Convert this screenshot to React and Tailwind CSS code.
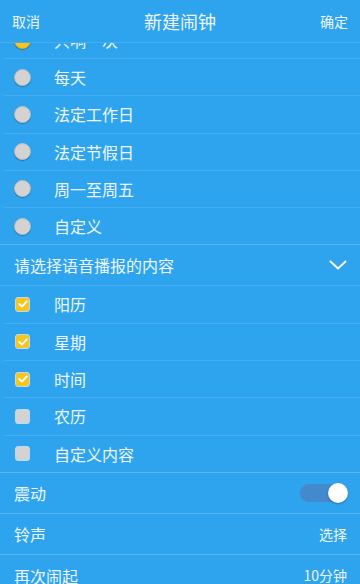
import React from 'react';

const repeatOptions = [
  { label: '只响一次', selected: true },
  { label: '每天' },
  { label: '法定工作日' },
  { label: '法定节假日' },
  { label: '周一至周五' },
  { label: '自定义' },
];

const voiceOptions = [
  { label: '阳历', checked: true },
  { label: '星期', checked: true },
  { label: '时间', checked: true },
  { label: '农历' },
  { label: '自定义内容' },
];

function Radio({ selected }) {
  return (
    <div
      className={`h-[17px] w-[17px] rounded-full border shadow-[0_1px_1px_rgba(0,0,0,0.25)] ${
        selected ? 'bg-[#f7c51c] border-[#e0ad10]' : 'bg-[#d3d3d3] border-[#bdbdbd]'
      }`}
    />
  );
}

function Checkbox({ checked }) {
  return (
    <div
      className={`flex h-[15px] w-[15px] items-center justify-center rounded-[3px] border ${
        checked ? 'bg-[#f7c51c] border-[#b9dcf5]' : 'bg-[#d3d3d3] border-[#b9dcf5]'
      }`}
    >
      {checked && (
        <svg width="10" height="8" viewBox="0 0 10 8">
          <path d="M1.2 4 L4 6.6 L8.8 1.4" fill="none" stroke="white" strokeWidth="1.8" strokeLinecap="round" strokeLinejoin="round" />
        </svg>
      )}
    </div>
  );
}

export default function App() {
  return (
    <div
      className="flex h-[584px] w-[360px] flex-col overflow-hidden bg-[#2ea3ee] text-[#eef7fd]"
      style={{ fontFamily: '"Noto Sans CJK SC", "Noto Sans", sans-serif' }}
    >
      <div className="flex h-[43px] shrink-0 items-center justify-between border-b border-[#45adf0] px-3">
        <span className="text-[14px]">取消</span>
        <span className="text-[18px]">新建闹钟</span>
        <span className="text-[14px]">确定</span>
      </div>

      <div className="flex-1 overflow-hidden">
        <div className="-mt-[21px]">
          {repeatOptions.map((o, i) => (
            <div
              key={o.label}
              className={`flex h-[37.2px] items-center border-b ${
                i === repeatOptions.length - 1 ? 'border-[#5ab7f2]' : 'ml-1 border-[#45adf0]'
              }`}
            >
              <div className={`${i === repeatOptions.length - 1 ? 'ml-[14px]' : 'ml-[10px]'} w-[40px]`}>
                <Radio selected={o.selected} />
              </div>
              <span className="text-[16px]">{o.label}</span>
            </div>
          ))}

          <div className="flex h-[41px] items-center justify-between border-b border-[#45adf0] pl-[14px] pr-[13px]">
            <span className="text-[16px]">请选择语音播报的内容</span>
            <svg width="18" height="10" viewBox="0 0 18 10">
              <path d="M1.5 1.5 L9 8.5 L16.5 1.5" fill="none" stroke="white" strokeWidth="2" strokeLinecap="round" strokeLinejoin="round" />
            </svg>
          </div>

          {voiceOptions.map((o, i) => (
            <div
              key={o.label}
              className={`flex h-[37.4px] items-center border-b ${
                i === voiceOptions.length - 1 ? 'border-[#5ab7f2]' : 'ml-1 border-[#45adf0]'
              }`}
            >
              <div className={`${i === voiceOptions.length - 1 ? 'ml-[15px]' : 'ml-[11px]'} w-[39px]`}>
                <Checkbox checked={o.checked} />
              </div>
              <span className="text-[16px]">{o.label}</span>
            </div>
          ))}

          <div className="flex h-[41px] items-center justify-between border-b border-[#5ab7f2] pl-[14px] pr-[13px]">
            <span className="text-[16px]">震动</span>
            <div className="flex h-[18px] w-[47px] items-center justify-end rounded-full bg-[#4389cb]">
              <div className="-mr-[1px] h-[20px] w-[20px] rounded-full bg-white shadow-[0_1px_2px_rgba(0,0,0,0.3)]" />
            </div>
          </div>

          <div className="flex h-[41px] items-center justify-between border-b border-[#5ab7f2] pl-[14px] pr-[13px]">
            <span className="text-[16px]">铃声</span>
            <span className="text-[14px]">选择</span>
          </div>

          <div className="flex h-[41px] items-center justify-between pl-[14px] pr-[13px]">
            <span className="text-[16px]">再次闹起</span>
            <span className="text-[14px]">10分钟</span>
          </div>
        </div>
      </div>
    </div>
  );
}
